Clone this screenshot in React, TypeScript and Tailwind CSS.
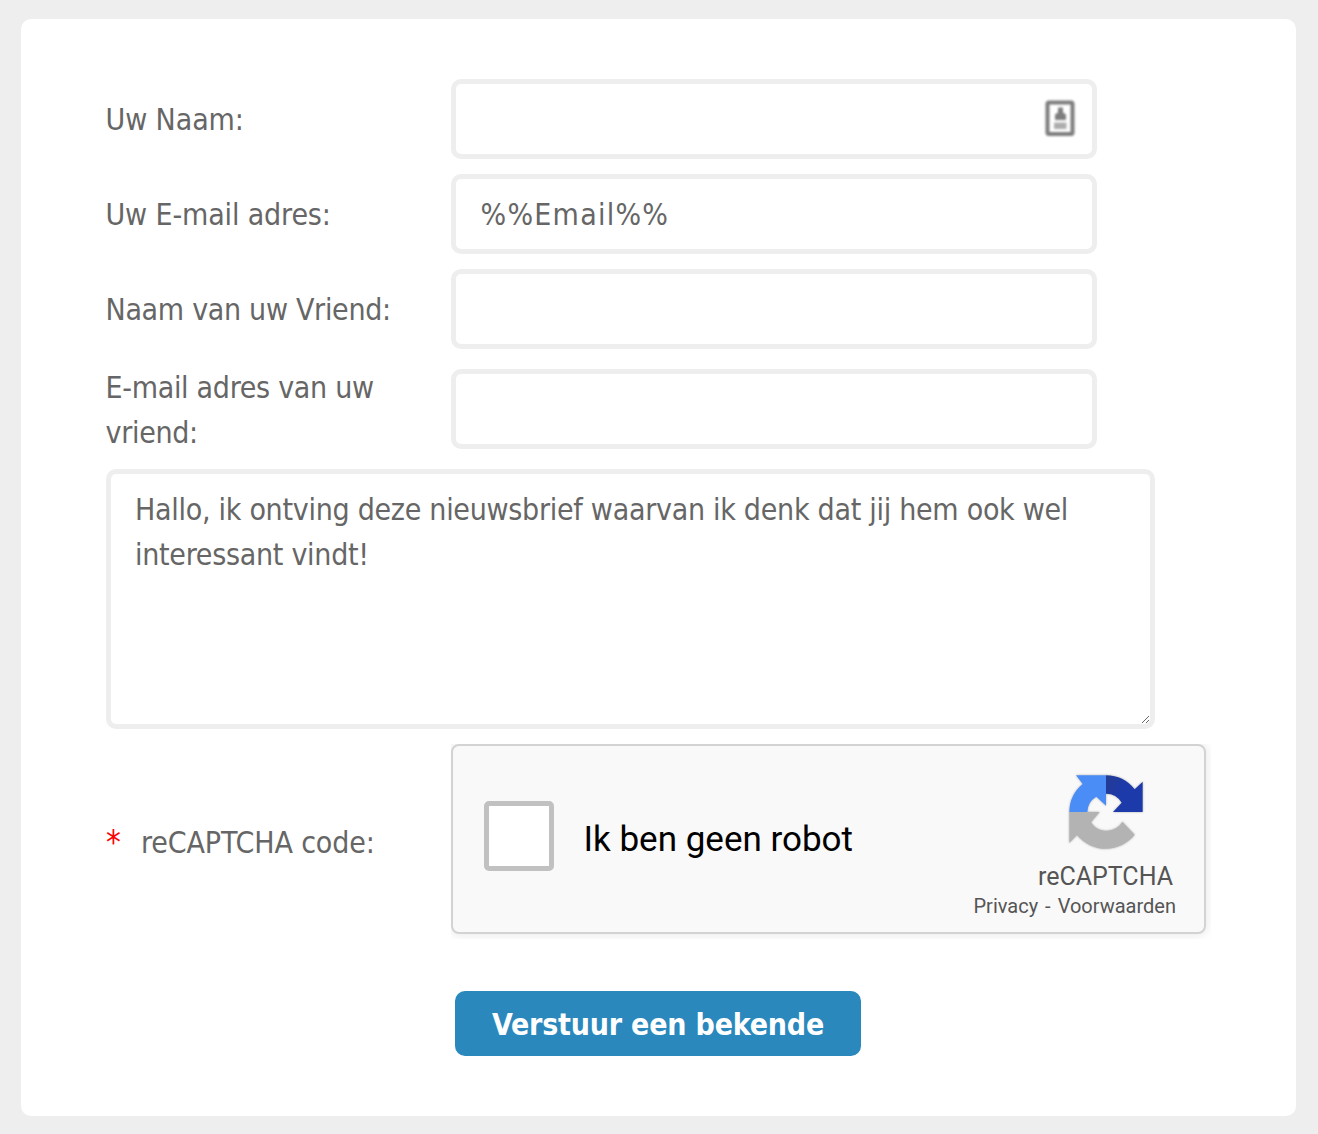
import { useState } from 'react';

interface FieldProps {
  label: string;
  name: string;
  value: string;
  onChange: (name: string, value: string) => void;
  tall?: boolean;
  contactIcon?: boolean;
  labelClass?: string;
}

function ContactIcon() {
  return (
    <svg
      className="pointer-events-none absolute top-[16px] right-[18px] h-[46px] w-[38px] blur-[1.1px]"
      viewBox="0 0 38 46"
      fill="none"
    >
      <rect x="6.500" y="7.500" width="25" height="31.500" rx="1.500" stroke="#7c7c7c" strokeWidth="4" />
      <path d="M17 12.500h5v5l3 2v5.500H14v-5.500l3-2z" fill="#7e7e7e" />
      <rect x="13" y="27.500" width="12.500" height="6.500" fill="#adadad" />
    </svg>
  );
}

function Field({ label, name, value, onChange, tall, contactIcon, labelClass = 'tracking-[-0.3px]' }: FieldProps) {
  return (
    <div className={tall ? 'flex h-[90px] items-center' : 'flex h-[80px] items-center'}>
      <div className={tall ? 'w-[345px] shrink-0 pt-[2px]' : 'w-[345px] shrink-0'}>
        <label htmlFor={name} className={`-ml-[0.5px] block pr-6 ${labelClass}`}>
          {label}
        </label>
      </div>
      <div className="relative">
        <input
          id={name}
          type="text"
          value={value}
          onChange={(e) => onChange(name, e.target.value)}
          className="block h-[80px] w-[646px] rounded-[10px] border-[5px] border-[#eeeeee] bg-white px-[24.5px] tracking-[1.25px] outline-none"
        />
        {contactIcon && <ContactIcon />}
      </div>
    </div>
  );
}

function RecaptchaLogo() {
  return (
    <svg
      className="mr-[61px] h-[75px] w-[74px] overflow-visible drop-shadow-[0_0_1px_rgba(0,0,0,0.3)]"
      viewBox="57 30 222 225"
    >
      <defs>
        <linearGradient id="navy" x1="0" y1="0" x2="1" y2="0.5">
          <stop offset="0" stopColor="#253c91" />
          <stop offset="0.5" stopColor="#1c3aa9" />
        </linearGradient>
      </defs>
      <path d="M78 31H168V122L139 95A55 55 0 0 0 112 141H58A110 110 0 0 1 98 57Z" fill="#4a8df6" />
      <path d="M168 31A110 110 0 0 1 254 73L278 50V141H189L215 113A55 55 0 0 0 168 86Z" fill="url(#navy)" />
      <path d="M58 141H149L123 172A55 55 0 0 0 217 170L254 209A110 110 0 0 1 81 210L58 234Z" fill="#b3b3b3" />
    </svg>
  );
}

function Recaptcha() {
  const [checked, setChecked] = useState(false);

  return (
    <div className="h-[195px] w-[760px] overflow-hidden font-['Roboto',sans-serif] [font-stretch:100%]">
      <div className="flex h-[190px] w-[755px] rounded-[8px] border-2 border-[#d3d3d3] bg-[#f9f9f9] shadow-[0_0_10px_2px_rgba(0,0,0,0.08)]">
        <div className="flex flex-1 items-center pl-[31px]">
          <button
            type="button"
            role="checkbox"
            aria-checked={checked}
            aria-label="Ik ben geen robot"
            onClick={() => setChecked(!checked)}
            className="mt-[-6px] size-[70px] rounded-[5px] border-[5px] border-[#c1c1c1] bg-white"
          />
          <span className="mt-[2px] ml-[29.5px] text-[35px] leading-[42px] whitespace-nowrap text-black">
            Ik ben geen robot
          </span>
        </div>
        <div className="flex flex-col items-end pt-[29px] whitespace-nowrap text-[#555555]">
          <RecaptchaLogo />
          <div className="mt-[12px] mr-[31px] text-[25px] leading-[30px]">reCAPTCHA</div>
          <div className="mt-[-1px] mr-[28px] text-[20px] leading-[30px]">
            <a>Privacy</a>
            <span className="mx-[7px]">-</span>
            <a>Voorwaarden</a>
          </div>
        </div>
      </div>
    </div>
  );
}

export default function App() {
  const [values, setValues] = useState<Record<string, string>>({
    naam: '',
    email: '%%Email%%',
    vriendNaam: '',
    vriendEmail: '',
    bericht: 'Hallo, ik ontving deze nieuwsbrief waarvan ik denk dat jij hem ook wel interessant vindt!',
  });

  const handleChange = (name: string, value: string) => {
    setValues((prev) => ({ ...prev, [name]: value }));
  };

  return (
    <div className="h-[1134px] bg-[#eeeeee] pt-[19px] pl-[21px] font-['DejaVu_Sans_Condensed','DejaVu_Sans','Noto_Sans',sans-serif] text-[30px] leading-[45px] text-[#666666] [font-stretch:75%]">
      <form
        onSubmit={(e) => e.preventDefault()}
        className="h-[1097px] w-[1275px] rounded-[10px] bg-white pt-[60px] pl-[85px]"
      >
        <div className="flex flex-col gap-[15px]">
          <Field label="Uw Naam:" name="naam" value={values.naam} onChange={handleChange} contactIcon labelClass="tracking-[-0.1px]" />
          <Field label="Uw E-mail adres:" name="email" value={values.email} onChange={handleChange} labelClass="tracking-[-0.14px]" />
          <Field label="Naam van uw Vriend:" name="vriendNaam" value={values.vriendNaam} onChange={handleChange} />
          <Field label="E-mail adres van uw vriend:" name="vriendEmail" value={values.vriendEmail} onChange={handleChange} tall />

          {/* Message */}
          <textarea
            value={values.bericht}
            onChange={(e) => handleChange('bericht', e.target.value)}
            className="block h-[260px] w-[1049px] rounded-[10px] border-[5px] border-[#eeeeee] bg-white px-[24px] py-[13px] tracking-[-0.28px] outline-none"
          />

          {/* Captcha */}
          <div className="flex h-[195px] items-center">
            <div className="flex w-[345px] shrink-0 pt-[2px]">
              <span className="w-[35px] text-[33px] text-[#ff0000]">*</span>
              <span className="tracking-[-0.14px]">reCAPTCHA code:</span>
            </div>
            <Recaptcha />
          </div>
        </div>

        <button
          type="submit"
          className="mt-[52px] ml-[349px] block h-[65px] w-[406px] rounded-[10px] bg-[#2a88bd] pt-[2px] font-bold tracking-[-0.2px] whitespace-nowrap text-white"
        >
          Verstuur een bekende
        </button>
      </form>
    </div>
  );
}
